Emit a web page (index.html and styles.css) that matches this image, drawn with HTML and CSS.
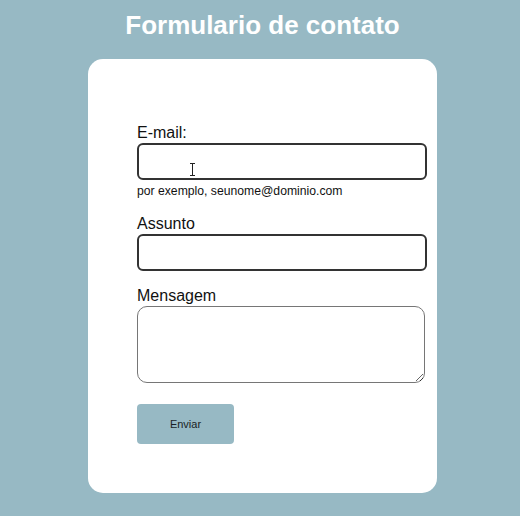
FILE: index.html
```html
<!DOCTYPE html>
<html lang="pt">
<head>
<meta charset="utf-8">
<title>Formulario de contato</title>
<link rel="stylesheet" href="styles.css">
</head>
<body>
<main class="page">
  <h1 class="title">Formulario de contato</h1>
  <form class="card">
    <div class="field">
      <label class="label" for="email">E-mail:</label>
      <div class="input-wrap">
        <input class="input" id="email" type="email">
        <svg class="cursor" width="7" height="13" viewBox="0 0 7 13" aria-hidden="true">
          <path d="M1 0.5h2M4 0.5h2M3.5 1v11M1 12.5h2M4 12.5h2M3 0.5h1M3 12.5h1" stroke="#222" stroke-width="1" fill="none"/>
        </svg>
      </div>
      <p class="hint">por exemplo, seunome@dominio.com</p>
    </div>
    <div class="field field-subject">
      <label class="label" for="assunto">Assunto</label>
      <input class="input" id="assunto" type="text">
    </div>
    <div class="field field-message">
      <label class="label" for="mensagem">Mensagem</label>
      <textarea class="textarea" id="mensagem"></textarea>
    </div>
    <button class="button" type="button">Enviar</button>
  </form>
</main>
</body>
</html>
```

FILE: styles.css
```css
* { box-sizing: border-box; }

html, body {
  margin: 0;
  padding: 0;
  background: #97b9c4;
  font-family: "Liberation Sans", Arial, sans-serif;
  color: #111;
}

.page {
  display: flex;
  flex-direction: column;
  align-items: center;
  padding-left: 5px;
}

.title {
  margin: 10px 0 19px;
  font-size: 26px;
  line-height: 30px;
  font-weight: bold;
  color: #fff;
}

.card {
  width: 349px;
  background: #fff;
  border-radius: 15px;
  padding: 64px 10px 49px 49px;
  display: flex;
  flex-direction: column;
  align-items: flex-start;
}

.field {
  display: flex;
  flex-direction: column;
  width: 100%;
}

.field-subject { margin-top: 16px; }
.field-message { margin-top: 15px; }

.label {
  font-size: 16px;
  line-height: 20px;
  color: #111;
}

.input-wrap {
  position: relative;
  width: 290px;
}

.cursor {
  position: absolute;
  left: 52px;
  top: 20px;
}

.input {
  display: block;
  width: 290px;
  height: 37px;
  margin: 0;
  border: 2px solid #333;
  border-radius: 6px;
  background: #fff;
  font: inherit;
}

.hint {
  margin: 4px 0 0;
  font-size: 12.2px;
  line-height: 14px;
  color: #111;
}

.textarea {
  width: 288px;
  height: 77px;
  margin: 0;
  border: 1px solid #767676;
  border-radius: 10px;
  background: #fff;
  font: inherit;
}

.button {
  margin-top: 21px;
  width: 97px;
  height: 40px;
  border: none;
  border-radius: 4px;
  background: #97b9c4;
  color: #1a1f26;
  font-family: "Liberation Sans", Arial, sans-serif;
  font-size: 11px;
}
```
